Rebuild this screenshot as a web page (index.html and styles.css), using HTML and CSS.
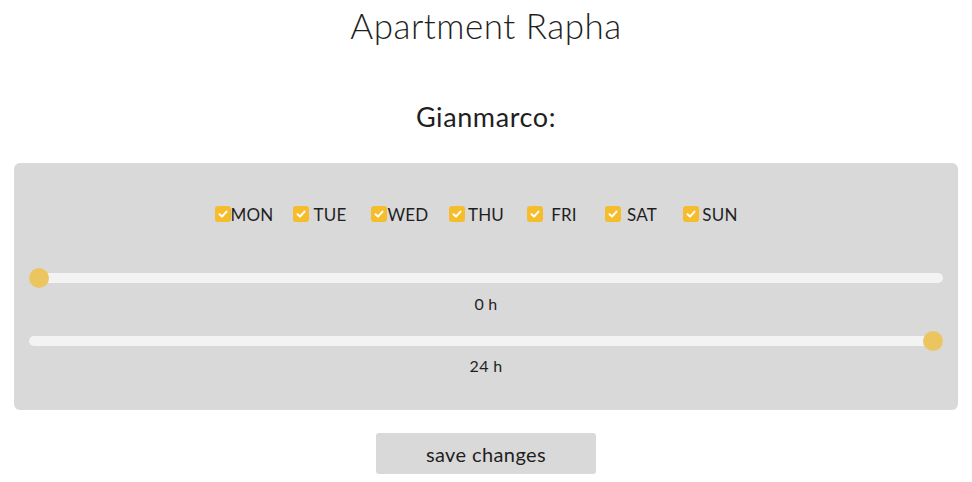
FILE: index.html
```html
<!DOCTYPE html>
<html>
<head>
<meta charset="utf-8">
<link rel="stylesheet" href="styles.css">
</head>
<body>
<h1 class="title">Apartment Rapha</h1>
<h2 class="person">Gianmarco:</h2>
<section class="panel">
  <div class="days">
    <label class="day"><span class="box"><svg viewBox="0 0 16 16" width="16" height="16"><path d="M4.5 8.3 L7 10.6 L11.5 5.6" fill="none" stroke="#fff" stroke-width="2" stroke-linecap="round" stroke-linejoin="round"/></svg></span><span class="name">MON</span></label>
    <label class="day"><span class="box"><svg viewBox="0 0 16 16" width="16" height="16"><path d="M4.5 8.3 L7 10.6 L11.5 5.6" fill="none" stroke="#fff" stroke-width="2" stroke-linecap="round" stroke-linejoin="round"/></svg></span><span class="name">TUE</span></label>
    <label class="day"><span class="box"><svg viewBox="0 0 16 16" width="16" height="16"><path d="M4.5 8.3 L7 10.6 L11.5 5.6" fill="none" stroke="#fff" stroke-width="2" stroke-linecap="round" stroke-linejoin="round"/></svg></span><span class="name">WED</span></label>
    <label class="day"><span class="box"><svg viewBox="0 0 16 16" width="16" height="16"><path d="M4.5 8.3 L7 10.6 L11.5 5.6" fill="none" stroke="#fff" stroke-width="2" stroke-linecap="round" stroke-linejoin="round"/></svg></span><span class="name">THU</span></label>
    <label class="day"><span class="box"><svg viewBox="0 0 16 16" width="16" height="16"><path d="M4.5 8.3 L7 10.6 L11.5 5.6" fill="none" stroke="#fff" stroke-width="2" stroke-linecap="round" stroke-linejoin="round"/></svg></span><span class="name">FRI</span></label>
    <label class="day"><span class="box"><svg viewBox="0 0 16 16" width="16" height="16"><path d="M4.5 8.3 L7 10.6 L11.5 5.6" fill="none" stroke="#fff" stroke-width="2" stroke-linecap="round" stroke-linejoin="round"/></svg></span><span class="name">SAT</span></label>
    <label class="day"><span class="box"><svg viewBox="0 0 16 16" width="16" height="16"><path d="M4.5 8.3 L7 10.6 L11.5 5.6" fill="none" stroke="#fff" stroke-width="2" stroke-linecap="round" stroke-linejoin="round"/></svg></span><span class="name">SUN</span></label>
  </div>
  <div class="slider slider-first"><div class="track"></div><div class="thumb thumb-start"></div></div>
  <div class="value value-first">0 h</div>
  <div class="slider slider-second"><div class="track"></div><div class="thumb thumb-end"></div></div>
  <div class="value value-second">24 h</div>
</section>
<div class="actions"><button class="save">save changes</button></div>
</body>
</html>
```
FILE: styles.css
```css
* { box-sizing: border-box; }
body {
  margin: 0;
  font-family: Lato, "Open Sans", sans-serif;
  color: #1f1f1f;
  background: #fff;
}
.title {
  margin: 0;
  padding-top: 4px;
  font-size: 35px;
  font-weight: 300;
  line-height: 42px;
  text-align: center;
  letter-spacing: 0.5px;
}
.person {
  margin: 55px 0 0;
  font-size: 27px;
  font-weight: 400;
  line-height: 32px;
  text-align: center;
  letter-spacing: 0.6px;
}
.panel {
  margin: 30px 14px 0;
  background: #d9d9d9;
  border-radius: 6px;
  padding: 41px 15px 34px;
}
.days {
  display: flex;
  justify-content: center;
  height: 20px;
  align-items: center;
  padding-left: 4px;
}
.day {
  display: flex;
  align-items: center;
  width: 78px;
  font-size: 17px;
}
.box {
  width: 16px;
  height: 16px;
  border-radius: 3px;
  background: #f5bd2b;
  display: flex;
}
.name {
  width: 38px;
  margin-left: 2px;
  display: flex;
  justify-content: center;
  white-space: nowrap;
  letter-spacing: 0.2px;
}
.slider {
  position: relative;
  height: 20px;
  display: flex;
  align-items: center;
}
.slider-first { margin-top: 44px; }
.slider-second { margin-top: 17px; }
.track {
  flex: 1;
  height: 10px;
  border-radius: 5px;
  background: #f3f3f3;
}
.thumb {
  position: absolute;
  top: 0;
  width: 20px;
  height: 20px;
  border-radius: 50%;
  background: #ebc55f;
}
.thumb-start { left: 0; }
.thumb-end { right: 0; }
.value {
  text-align: center;
  font-size: 16px;
  line-height: 20px;
  letter-spacing: 0.3px;
}
.value-first { margin-top: 6px; }
.value-second { margin-top: 5px; }
.actions {
  display: flex;
  justify-content: center;
  margin-top: 23px;
}
.save {
  width: 220px;
  height: 41px;
  border: none;
  border-radius: 3px;
  background: #d9d9d9;
  font-family: inherit;
  font-size: 20px;
  letter-spacing: 0.4px;
  color: #1f1f1f;
  padding: 0;
}
```
